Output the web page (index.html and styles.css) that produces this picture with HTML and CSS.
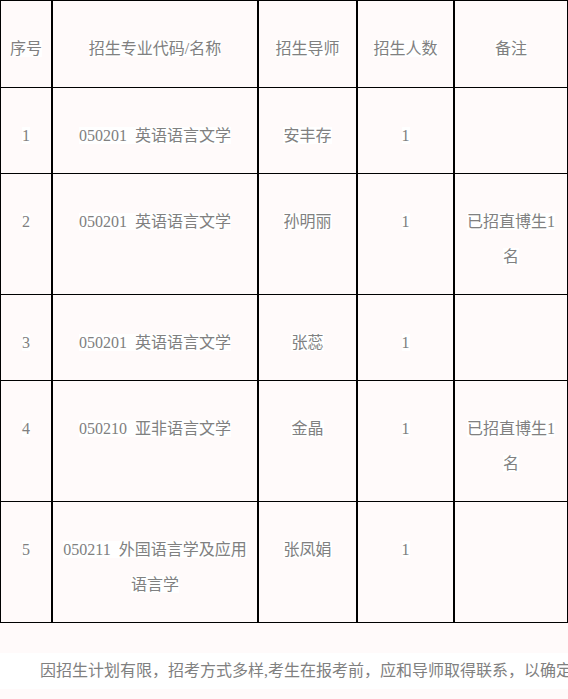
FILE: index.html
```html
<!DOCTYPE html>
<html lang="zh-CN">
<head>
<meta charset="utf-8">
<title>招生计划</title>
<link rel="stylesheet" href="styles.css">
</head>
<body>
<table class="plan">
  <colgroup>
    <col class="c1"><col class="c2"><col class="c3"><col class="c4"><col class="c5">
  </colgroup>
  <tr class="one head">
    <td><span>序号</span></td>
    <td><span>招生专业代码/名称</span></td>
    <td><span>招生导师</span></td>
    <td><span>招生人数</span></td>
    <td><span>备注</span></td>
  </tr>
  <tr class="one">
    <td><span>1</span></td>
    <td><span>050201 英语语言文学</span></td>
    <td><span>安丰存</span></td>
    <td><span>1</span></td>
    <td></td>
  </tr>
  <tr class="two">
    <td><span>2</span></td>
    <td><span>050201 英语语言文学</span></td>
    <td><span>孙明丽</span></td>
    <td><span>1</span></td>
    <td><span>已招直博生1名</span></td>
  </tr>
  <tr class="one">
    <td><span>3</span></td>
    <td><span>050201 英语语言文学</span></td>
    <td><span>张蕊</span></td>
    <td><span>1</span></td>
    <td></td>
  </tr>
  <tr class="two">
    <td><span>4</span></td>
    <td><span>050210 亚非语言文学</span></td>
    <td><span>金晶</span></td>
    <td><span>1</span></td>
    <td><span>已招直博生1名</span></td>
  </tr>
  <tr class="two">
    <td><span>5</span></td>
    <td><span>050211 外国语言学及应用语言学</span></td>
    <td><span>张凤娟</span></td>
    <td><span>1</span></td>
    <td></td>
  </tr>
</table>
<p class="note">因招生计划有限，招考方式多样,考生在报考前，应和导师取得联系，以确定</p>
</body>
</html>
```

FILE: styles.css
```css
html, body {
  margin: 0;
  padding: 0;
  background: #fffafa;
}

body {
  width: 568px;
  overflow: hidden;
  font-family: "Liberation Serif", "Noto Sans CJK SC", serif;
  font-size: 16px;
  color: #808080;
}

.plan {
  width: 568px;
  table-layout: fixed;
  border-collapse: separate;
  border-spacing: 0;
  border: 1px solid #000;
}

.plan .c1 { width: 50px; }
.plan .c2 { width: 206px; }
.plan .c3 { width: 99px; }
.plan .c4 { width: 97px; }
.plan .c5 { width: 114px; }

.plan td {
  padding: 30px 8px 20px;
  line-height: 35px;
  text-align: center;
  vertical-align: top;
  border-left: 2px solid #000;
  border-top: 1px solid #000;
}

.plan td:first-child {
  border-left: 0;
}

.plan tr:first-child td {
  border-top: 0;
}

.plan .head td {
  padding-bottom: 21px;
}

.plan .one td { height: 35px; }
.plan .two td { height: 70px; }

.plan span {
  background: #fff;
  word-spacing: 4px;
}

.note {
  margin: 30px 0 0;
  padding: 0 0 0 40px;
  line-height: 36px;
  background: #fff;
  white-space: nowrap;
  overflow: hidden;
}
```
